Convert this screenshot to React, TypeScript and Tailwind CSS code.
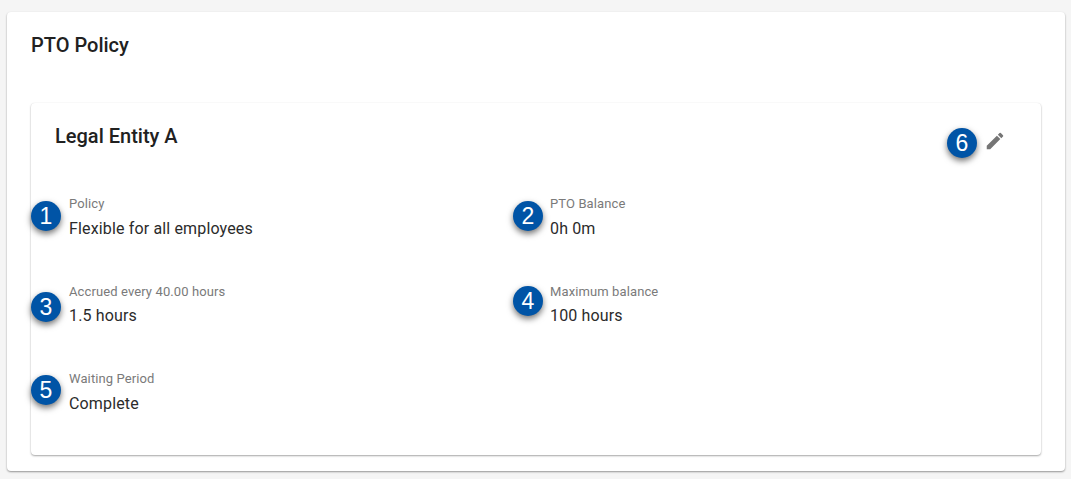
import React from 'react';
import { MdEdit } from 'react-icons/md';

const Badge: React.FC<{ n: number; className: string }> = ({ n, className }) => (
  <div
    className={`absolute flex h-[30px] w-[30px] items-center justify-center rounded-full bg-[#0054a6] text-[23px] leading-none text-white shadow-[0_3px_6px_rgba(0,0,0,0.55)] font-['Liberation_Sans',sans-serif] ${className}`}
  >
    {n}
  </div>
);

const Field: React.FC<{ label: string; value: string }> = ({ label, value }) => (
  <div className="h-[87.5px]">
    <div className="text-[13px] leading-[18px] tracking-[0.11px] text-[#7a7a7a]">{label}</div>
    <div className="mt-[3.9px] text-[16px] leading-[24px] tracking-[0.15px] text-[#2b2b2b]">{value}</div>
  </div>
);

export default function App() {
  return (
    <div className="h-[479px] w-[1071px] overflow-hidden bg-[#f5f5f5] pt-[12px] pl-[7px] font-['Roboto',sans-serif]">
      <div className="h-[459px] w-[1058px] rounded-[4px] bg-white px-[24px] pt-[20px] shadow-[0_1px_2px_rgba(0,0,0,0.4)]">
        <h1 className="text-[20px] leading-[26px] font-medium text-[#212121]">PTO Policy</h1>
        <div className="relative mt-[45px] h-[352px] w-[1010px] rounded-[4px] bg-white shadow-[0_1px_2px_rgba(0,0,0,0.35),0_0_1px_rgba(0,0,0,0.08)]">
          <div className="flex items-start justify-between pt-[20px] pr-[35px] pl-[24px]">
            <h2 className="text-[20px] leading-[26px] font-medium text-[#212121]">Legal Entity A</h2>
            <MdEdit className="mt-[7px] h-[22px] w-[22px] text-[#757575]" />
          </div>
          <div className="mt-[43px] grid grid-cols-[481px_1fr] pl-[38px]">
            <Field label="Policy" value="Flexible for all employees" />
            <Field label="PTO Balance" value="0h 0m" />
            <Field label="Accrued every 40.00 hours" value="1.5 hours" />
            <Field label="Maximum balance" value="100 hours" />
            <Field label="Waiting Period" value="Complete" />
          </div>
          <Badge n={1} className="top-[98px] left-0" />
          <Badge n={2} className="top-[98px] left-[482px]" />
          <Badge n={3} className="top-[189px] left-0" />
          <Badge n={4} className="top-[183px] left-[482px]" />
          <Badge n={5} className="top-[272px] left-0" />
          <Badge n={6} className="top-[25px] left-[916px]" />
        </div>
      </div>
    </div>
  );
}
